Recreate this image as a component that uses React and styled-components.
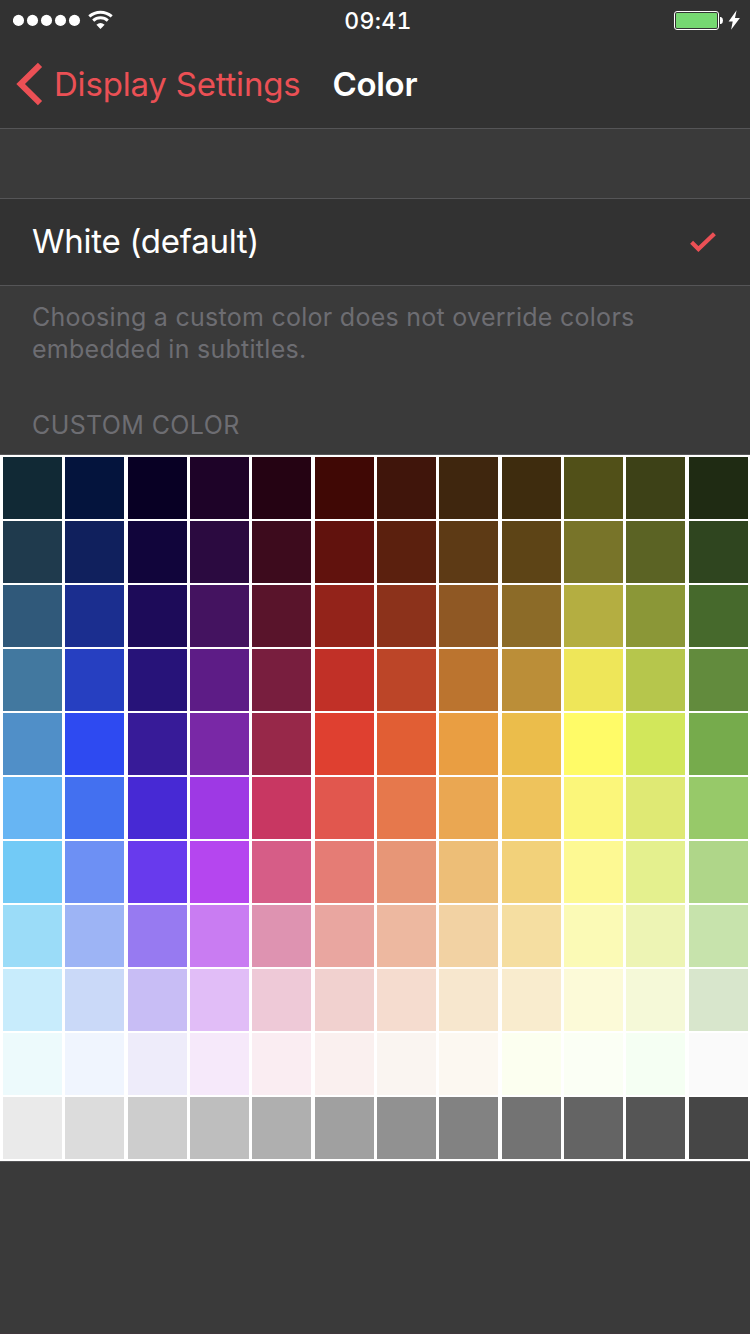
import React from "react";
import styled, { createGlobalStyle } from "styled-components";

const GlobalStyle = createGlobalStyle`
  * { box-sizing: border-box; }
  body { margin: 0; background: #3a3a3a; }
`;

const accent = "#eb5055";

const Screen = styled.div`
  display: flex;
  flex-direction: column;
  width: 750px;
  height: 1334px;
  overflow: hidden;
  background: #3a3a3a;
  border-bottom: 1px solid #3f373c;
  font-family: Inter, "Liberation Sans", sans-serif;
  color: #fff;
`;

const Header = styled.header`
  flex: none;
  height: 129px;
  background: #323232;
  border-bottom: 1px solid #555557;
`;

const StatusBar = styled.div`
  display: grid;
  grid-template-columns: 1fr auto 1fr;
  align-items: center;
  height: 40px;
  padding: 0 10px 0 13px;
`;

const StatusGroup = styled.div`
  display: flex;
  align-items: center;
  height: 40px;
  justify-content: ${(p) => (p.$end ? "flex-end" : "flex-start")};
`;

const Clock = styled.time`
  margin-right: -3px;
  padding-top: 2px;
  font-size: 23px;
  line-height: 38px;
  font-weight: 500;
  letter-spacing: 0.3px;
  font-variant-numeric: tabular-nums;
`;

const NavBar = styled.nav`
  display: flex;
  align-items: center;
  height: 88px;
  padding-left: 16px;
`;

const BackButton = styled.button`
  display: flex;
  align-items: center;
  gap: 10px;
  padding: 0;
  border: 0;
  background: none;
  color: ${accent};
  font: inherit;
  font-size: 33px;
  line-height: 40px;
  letter-spacing: -0.2px;
  white-space: nowrap;
`;

const Title = styled.h1`
  margin: 0 0 0 32px;
  font-size: 33px;
  line-height: 40px;
  font-weight: 600;
  letter-spacing: -0.3px;
`;

const OptionRow = styled.div`
  display: flex;
  flex: none;
  align-items: center;
  justify-content: space-between;
  height: 88px;
  margin-top: 69px;
  padding: 0 34px 0 32px;
  background: #323232;
  border: solid #555557;
  border-width: 1px 0;
`;

const OptionLabel = styled.span`
  padding-bottom: 2px;
  font-size: 33px;
  line-height: 40px;
  letter-spacing: -0.27px;
`;

const Note = styled.p`
  margin: 15px 0 0;
  padding-left: 32px;
  font-size: 25px;
  line-height: 32px;
  letter-spacing: 0.27px;
  color: #6d6d72;
`;

const SectionTitle = styled.h2`
  margin: 44px 0 0;
  padding-left: 32px;
  height: 45px;
  font-size: 25px;
  line-height: 32px;
  font-weight: 400;
  letter-spacing: 0.38px;
  color: #6d6d72;
`;

const Palette = styled.div`
  display: grid;
  flex: none;
  grid-template-columns: repeat(3, 62px 63px 62px) 62px 63px 59px;
  grid-auto-rows: 62px;
  row-gap: 2px;
  height: 708px;
  padding: 2px 0 2px 3px;
  background: #fff;
  border: solid #555557;
  border-width: 1px 0;
`;

const Swatch = styled.div`
  width: 59px;
  background: ${(p) => p.$color};
`;

const rows = [
  "112935 04143d 080024 1e0328 250313 400805 40150b 3f260e 3e2c0e 515018 3d4117 1f2b13",
  "1f3a4d 10205d 11053b 2b0a40 3d0b1d 61120d 5b200e 5d3a15 5d4416 787429 5b6324 2f451f",
  "30597a 1b2e8f 1d0b59 441360 59142b 93231a 8c321b 8f5824 8c6b28 b4ae41 8b9737 46692c",
  "42789f 263fc1 271379 5d1c86 781e3e c13027 bc4528 bb742f bb8e38 eee659 b6c64c 628b3d",
  "508fc8 2e4af1 371b98 7928a6 972849 df4030 e15e34 e99e42 ebbd4b fffb67 d2e75b 76ab4c",
  "67b5f3 4370f0 4729d4 9e39e4 c83762 e1574e e6784c eaa752 eec35c fbf67a dfe974 97c969",
  "72caf6 6d90f4 683aed b546ef d65d87 e57c75 e79677 edbe77 f2d17a fdf993 e4f08e afd689",
  "9bdcf8 9db4f5 977af1 c97cf2 de93b1 e9a6a0 edb8a0 f2d2a3 f5dea1 fbfab6 edf4b4 c7e3ac",
  "c8ecfc cad9f8 c8bdf5 e1bdf7 eec9d7 f1d1cf f5dccf f7e7ce f9ecce fcfad8 f5f9d8 d8e6cc",
  "edfafc f0f5fe eeecfa f6e9fa faedf2 faf0ef faf5f1 fcf8f1 fcfff0 fbfff5 f5fff3 fafafa",
  "eaeaea dcdcdc cdcdcd bebebe afafaf a0a0a0 919191 828282 737373 646464 555555 464646",
];
const colors = rows.flatMap((row) => row.split(" "));

const SignalIcon = () => (
  <svg width="68" height="12" viewBox="0 0 68 12" fill="#fff">
    {[5.5, 19.5, 33.5, 47.5, 61.5].map((x) => (
      <circle key={x} cx={x} cy="6.4" r="5.55" />
    ))}
  </svg>
);

const WifiGlyph = styled.svg`
  margin-left: 7px;
`;

const WifiIcon = () => (
  <WifiGlyph width="26" height="20" viewBox="0 0 26 20">
    <g fill="none" stroke="#fff" strokeWidth="3">
      <path d="M1.3 6.4A17 17 0 0 1 23.7 6.4" />
      <path d="M5.2 10.7A10.8 10.8 0 0 1 19.8 10.7" />
    </g>
    <path d="M8.4 14.7Q12.5 11.3 16.6 14.7L12.5 19Z" fill="#fff" />
  </WifiGlyph>
);

const BatteryIcon = () => (
  <svg width="50" height="20" viewBox="0 0 50 20">
    <rect x="0.5" y="1.5" width="44" height="18" rx="2.5" fill="none" stroke="#fff" />
    <rect x="2" y="3" width="41" height="15" rx="1" fill="#76d872" />
    <path d="M46 7h1q2 .7 2 3.5T47 14h-1Z" fill="#fff" />
  </svg>
);

const BoltGlyph = styled.svg`
  margin-left: 4px;
`;

const BoltIcon = () => (
  <BoltGlyph width="12" height="20" viewBox="0 0 12 20">
    <path d="M8.6.2.6 11.4H4.7L3.1 19.8 11.9 8.1H7Z" fill="#fff" />
  </BoltGlyph>
);

const BackIcon = () => (
  <svg width="28" height="44" viewBox="0 0 28 44">
    <path d="M24 2.9 4.6 22 24 41.1" fill="none" stroke={accent} strokeWidth="6" />
  </svg>
);

const CheckIcon = () => (
  <svg width="26" height="20" viewBox="0 0 26 20">
    <path d="M1.6 10.2 8.4 17 24.4 1.7" fill="none" stroke={accent} strokeWidth="4.2" />
  </svg>
);

export default function App() {
  return (
    <Screen>
      <GlobalStyle />
      <Header>
        <StatusBar>
          <StatusGroup>
            <SignalIcon />
            <WifiIcon />
          </StatusGroup>
          <Clock>09:41</Clock>
          <StatusGroup $end>
            <BatteryIcon />
            <BoltIcon />
          </StatusGroup>
        </StatusBar>
        <NavBar>
          <BackButton>
            <BackIcon />
            Display Settings
          </BackButton>
          <Title>Color</Title>
        </NavBar>
      </Header>
      <OptionRow>
        <OptionLabel>White (default)</OptionLabel>
        <CheckIcon />
      </OptionRow>
      <Note>
        Choosing a custom color does not override colors
        <br />
        embedded in subtitles.
      </Note>
      <SectionTitle>CUSTOM COLOR</SectionTitle>
      <Palette>
        {colors.map((color, i) => (
          <Swatch key={i} $color={`#${color}`} />
        ))}
      </Palette>
    </Screen>
  );
}
